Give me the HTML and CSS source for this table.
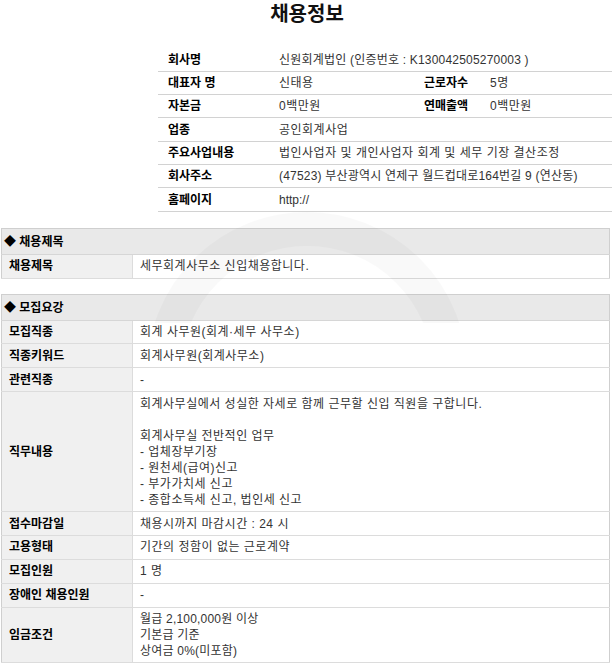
FILE: index.html
```html
<!DOCTYPE html>
<html lang="ko">
<head>
<meta charset="utf-8">
<title>채용정보</title>
<link rel="stylesheet" href="styles.css">
</head>
<body>
<div class="page">
  <h1 class="title">채용정보</h1>

  <table class="info">
    <colgroup>
      <col class="c1"><col class="c2"><col class="c3"><col class="c4">
    </colgroup>
    <tr><th>회사명</th><td colspan="3" class="mix">신원회계법인 (인증번호 : K130042505270003 )</td></tr>
    <tr><th>대표자 명</th><td class="ko">신태용</td><th>근로자수</th><td class="ko">5명</td></tr>
    <tr><th>자본금</th><td class="ko">0백만원</td><th>연매출액</th><td class="ko">0백만원</td></tr>
    <tr><th>업종</th><td colspan="3" class="ko">공인회계사업</td></tr>
    <tr><th>주요사업내용</th><td colspan="3" class="ko">법인사업자 및 개인사업자 회계 및 세무 기장 결산조정</td></tr>
    <tr><th>회사주소</th><td colspan="3" class="mix">(47523) 부산광역시 연제구 월드컵대로164번길 9 (연산동)</td></tr>
    <tr><th>홈페이지</th><td colspan="3">http://</td></tr>
  </table>

  <table class="sec">
    <colgroup><col class="l"><col></colgroup>
    <tr><th class="head" colspan="2">◆ 채용제목</th></tr>
    <tr><th>채용제목</th><td class="ko">세무회계사무소 신입채용합니다.</td></tr>
  </table>

  <table class="sec">
    <colgroup><col class="l"><col></colgroup>
    <tr><th class="head" colspan="2">◆ 모집요강</th></tr>
    <tr><th>모집직종</th><td class="ko">회계 사무원(회계·세무 사무소)</td></tr>
    <tr><th>직종키워드</th><td class="ko">회계사무원(회계사무소)</td></tr>
    <tr><th>관련직종</th><td>-</td></tr>
    <tr><th>직무내용</th><td class="ko">회계사무실에서 성실한 자세로 함께 근무할 신입 직원을 구합니다.<br><br>회계사무실 전반적인 업무<br>- 업체장부기장<br>- 원천세(급여)신고<br>- 부가가치세 신고<br>- 종합소득세 신고, 법인세 신고</td></tr>
    <tr><th>접수마감일</th><td class="ko">채용시까지 마감시간 : 24 시</td></tr>
    <tr><th>고용형태</th><td class="ko">기간의 정함이 없는 근로계약</td></tr>
    <tr><th>모집인원</th><td class="ko">1 명</td></tr>
    <tr><th>장애인 채용인원</th><td>-</td></tr>
    <tr><th>임금조건</th><td class="mix">월급 2,100,000원 이상<br>기본급 기준<br>상여금 0%(미포함)</td></tr>
  </table>

  <div class="mark-clip"><div class="mark"></div></div>
</div>
</body>
</html>
```

FILE: styles.css
```css
html, body {
  margin: 0;
  padding: 0;
  background: #fff;
}

body {
  font-family: "Liberation Sans", "Noto Sans CJK KR", sans-serif;
  font-size: 12px;
  color: #333;
}

.page {
  position: relative;
  width: 614px;
  overflow: hidden;
}

.title {
  margin: 0;
  padding-top: 2px;
  height: 46px;
  font-size: 20px;
  line-height: 24px;
  font-weight: bold;
  color: #111;
  text-align: center;
}

.ko { letter-spacing: 0.5px; }
.mix { letter-spacing: 0.2px; }

.info {
  margin-left: 158px;
  width: 454px;
  border-collapse: collapse;
  table-layout: fixed;
}

.info .c1 { width: 111px; }
.info .c2 { width: 145px; }
.info .c3 { width: 66px; }
.info .c4 { width: 132px; }

.info th,
.info td {
  padding: 3.17px 0 3.16px 10px;
  line-height: 16px;
  text-align: left;
  vertical-align: middle;
  border-bottom: 1px solid #d2d2d2;
  white-space: nowrap;
}

.info th {
  color: #000;
  font-weight: bold;
}

.info td {
  color: #333;
}

.info tr:first-child th,
.info tr:first-child td {
  padding-top: 3.67px;
}

.sec {
  margin: 16px 0 0 1px;
  width: 609px;
  border-collapse: collapse;
  table-layout: fixed;
  border: 1px solid #cfcfcf;
}

.sec + .sec {
  margin-top: 15px;
}

.sec .l { width: 131px; }

.sec th,
.sec td {
  padding: 3.45px 0 3.45px 7px;
  line-height: 16px;
  text-align: left;
  vertical-align: middle;
  border-bottom: 1px solid #dcdcdc;
}

.sec th {
  background: #f0f0f0;
  color: #000;
  font-weight: bold;
  border-right: 1px solid #dcdcdc;
}

.sec td {
  color: #333;
}

.sec th.head {
  background: #e9e9e9;
  padding: 5px 0 4px 2px;
  border-right: none;
  border-bottom: 1px solid #d6d6d6;
}

.mark-clip {
  position: absolute;
  left: 0;
  top: 205px;
  width: 614px;
  height: 118px;
  overflow: hidden;
  pointer-events: none;
}

.mark {
  position: absolute;
  left: 147px;
  top: 7px;
  width: 320px;
  height: 320px;
  box-sizing: border-box;
  border-radius: 50%;
  border: 34px solid rgba(0, 0, 0, 0.025);
}
```
